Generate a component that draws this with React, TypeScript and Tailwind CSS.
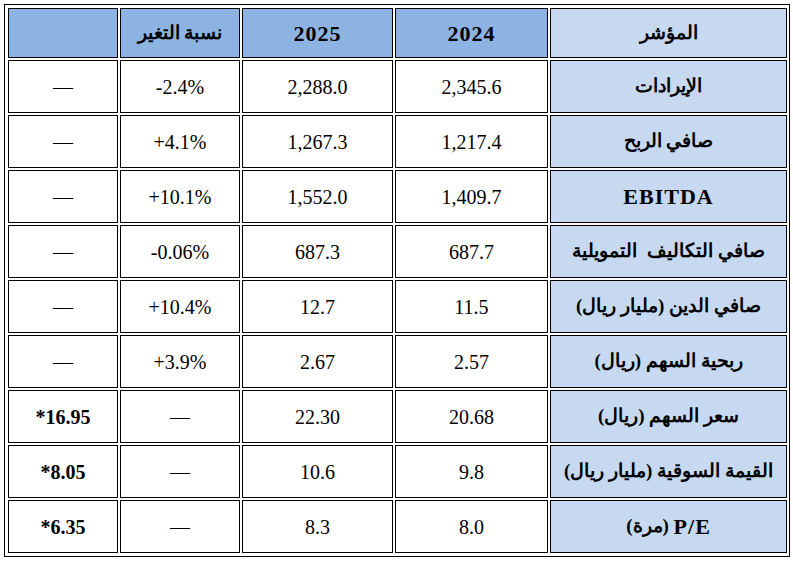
import type { ReactNode } from "react";

const latin = "text-[22px] tracking-[1px]";

const rows: { label: ReactNode; key: string; y24: string; y25: string; chg: string; last: string; bold?: boolean }[] = [
  { key: "rev", label: "الإيرادات", y24: "2,345.6", y25: "2,288.0", chg: "-2.4%", last: "—" },
  { key: "np", label: "صافي الربح", y24: "1,217.4", y25: "1,267.3", chg: "+4.1%", last: "—" },
  { key: "ebitda", label: <span className={latin}>EBITDA</span>, y24: "1,409.7", y25: "1,552.0", chg: "+10.1%", last: "—" },
  { key: "fin", label: "صافي التكاليف  التمويلية", y24: "687.7", y25: "687.3", chg: "-0.06%", last: "—" },
  { key: "debt", label: "صافي الدين (مليار ريال)", y24: "11.5", y25: "12.7", chg: "+10.4%", last: "—" },
  { key: "eps", label: "ربحية السهم (ريال)", y24: "2.57", y25: "2.67", chg: "+3.9%", last: "—" },
  { key: "price", label: "سعر السهم (ريال)", y24: "20.68", y25: "22.30", chg: "—", last: "*16.95", bold: true },
  { key: "mcap", label: "القيمة السوقية (مليار ريال)", y24: "9.8", y25: "10.6", chg: "—", last: "*8.05", bold: true },
  {
    key: "pe",
    label: (
      <>
        <span className={latin}>P/E</span> (مرة)
      </>
    ),
    y24: "8.0",
    y25: "8.3",
    chg: "—",
    last: "*6.35",
    bold: true,
  },
];

const serif = "font-['Liberation_Serif','Times_New_Roman','DejaVu_Serif',serif]";
const cell = "flex items-center justify-center border border-black text-black";

export default function App() {
  return (
    <div className="min-h-[564px] w-[793px] bg-white pt-[4px] pl-[4px]">
      <div className="w-fit border border-black bg-white pt-[3px] pl-[3px] pr-[2px] pb-[3px]">
        <div
          className={`grid grid-cols-[110px_120px_151px_153px_237px] grid-rows-[50px_repeat(9,53px)] gap-[2px] ${serif} text-[20px]`}
        >
          <div className={`${cell} bg-[#8db3e2]`} />
          <div dir="rtl" className={`${cell} bg-[#8db3e2] text-[19px] font-bold`}>
            نسبة التغير
          </div>
          <div className={`${cell} bg-[#8db3e2] font-bold ${latin}`}>2025</div>
          <div className={`${cell} bg-[#8db3e2] font-bold ${latin}`}>2024</div>
          <div dir="rtl" className={`${cell} bg-[#c6d9f1] text-[19px] font-bold`}>
            المؤشر
          </div>

          {rows.map((r) => (
            <div key={r.key} className="contents">
              <div className={`${cell} bg-white ${r.bold ? "font-bold" : ""}`}>{r.last}</div>
              <div className={`${cell} bg-white`}>{r.chg}</div>
              <div className={`${cell} bg-white`}>{r.y25}</div>
              <div className={`${cell} bg-white`}>{r.y24}</div>
              <div dir="rtl" className={`${cell} bg-[#c6d9f1] whitespace-pre text-[19px] font-bold`}>
                {r.label}
              </div>
            </div>
          ))}
        </div>
      </div>
    </div>
  );
}
